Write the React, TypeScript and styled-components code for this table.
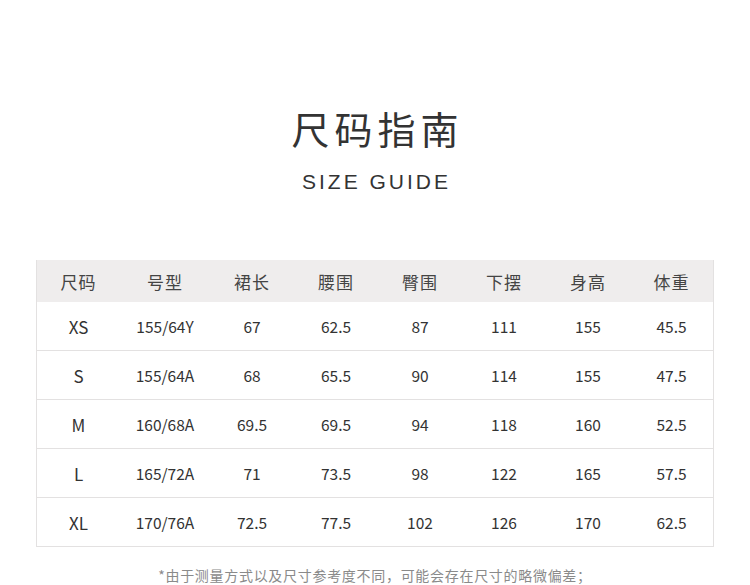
import React from "react";
import styled, { createGlobalStyle } from "styled-components";

const Global = createGlobalStyle`
  html, body { margin: 0; padding: 0; background: #fff; }
  body { font-family: "Noto Sans CJK SC", "Noto Sans", sans-serif; color: #333; }
`;

const Page = styled.div`
  width: 750px;
  height: 585px;
  overflow: hidden;
  display: flex;
  flex-direction: column;
  align-items: center;
  padding-top: 106px;
  box-sizing: border-box;
`;

const Title = styled.h1`
  margin: 0;
  font-family: "Noto Sans CJK SC", sans-serif;
  font-weight: 400;
  font-size: 38px;
  line-height: 44px;
  letter-spacing: 5px;
  padding-left: 5px;
  color: #333;
`;

const Subtitle = styled.div`
  margin-top: 20px;
  font-family: "Liberation Sans", Arial, sans-serif;
  font-size: 21px;
  line-height: 24px;
  letter-spacing: 3px;
  padding-left: 3px;
  color: #333;
`;

const Table = styled.div`
  margin-top: 66px;
  width: 678px;
  border: 1px solid #e3e1e1;
  border-top: none;
  box-sizing: border-box;
`;

const Row = styled.div<{ $head?: boolean }>`
  display: grid;
  grid-template-columns: 83px 90px 84px 84px 84px 84px 84px 1fr;
  height: ${(p) => (p.$head ? "42px" : "49px")};
  background: ${(p) => (p.$head ? "#efeded" : "#fff")};
  border-top: ${(p) => (p.$head ? "none" : "1px solid #e3e1e1")};
  box-sizing: border-box;
  &:first-child { border-top: none; }
  &:nth-child(2) { border-top: none; height: 48px; }
`;

const Cell = styled.div<{ $head?: boolean; $first?: boolean }>`
  display: flex;
  align-items: center;
  justify-content: center;
  font-family: "Noto Sans CJK SC", sans-serif;
  font-size: ${(p) => (p.$head ? "17px" : p.$first ? "17px" : "15.5px")};
  color: ${(p) => (p.$head ? "#444" : "#333")};
  letter-spacing: ${(p) => (p.$head ? "1px" : "0")};
`;

const Note = styled.div`
  margin-top: 18px;
  font-family: "Noto Sans CJK SC", sans-serif;
  font-size: 14px;
  line-height: 20px;
  letter-spacing: 0.7px;
  color: #8a8a8a;
`;

const headers = ["尺码", "号型", "裙长", "腰围", "臀围", "下摆", "身高", "体重"];
const rows = [
  ["XS", "155/64Y", "67", "62.5", "87", "111", "155", "45.5"],
  ["S", "155/64A", "68", "65.5", "90", "114", "155", "47.5"],
  ["M", "160/68A", "69.5", "69.5", "94", "118", "160", "52.5"],
  ["L", "165/72A", "71", "73.5", "98", "122", "165", "57.5"],
  ["XL", "170/76A", "72.5", "77.5", "102", "126", "170", "62.5"],
];

export default function App() {
  return (
    <>
      <Global />
      <Page>
        <Title>尺码指南</Title>
        <Subtitle>SIZE GUIDE</Subtitle>
        <Table>
          <Row $head>
            {headers.map((h) => (
              <Cell key={h} $head>{h}</Cell>
            ))}
          </Row>
          {rows.map((r) => (
            <Row key={r[0]}>
              {r.map((c, i) => (
                <Cell key={i} $first={i === 0}>{c}</Cell>
              ))}
            </Row>
          ))}
        </Table>
        <Note>*由于测量方式以及尺寸参考度不同，可能会存在尺寸的略微偏差；</Note>
      </Page>
    </>
  );
}
